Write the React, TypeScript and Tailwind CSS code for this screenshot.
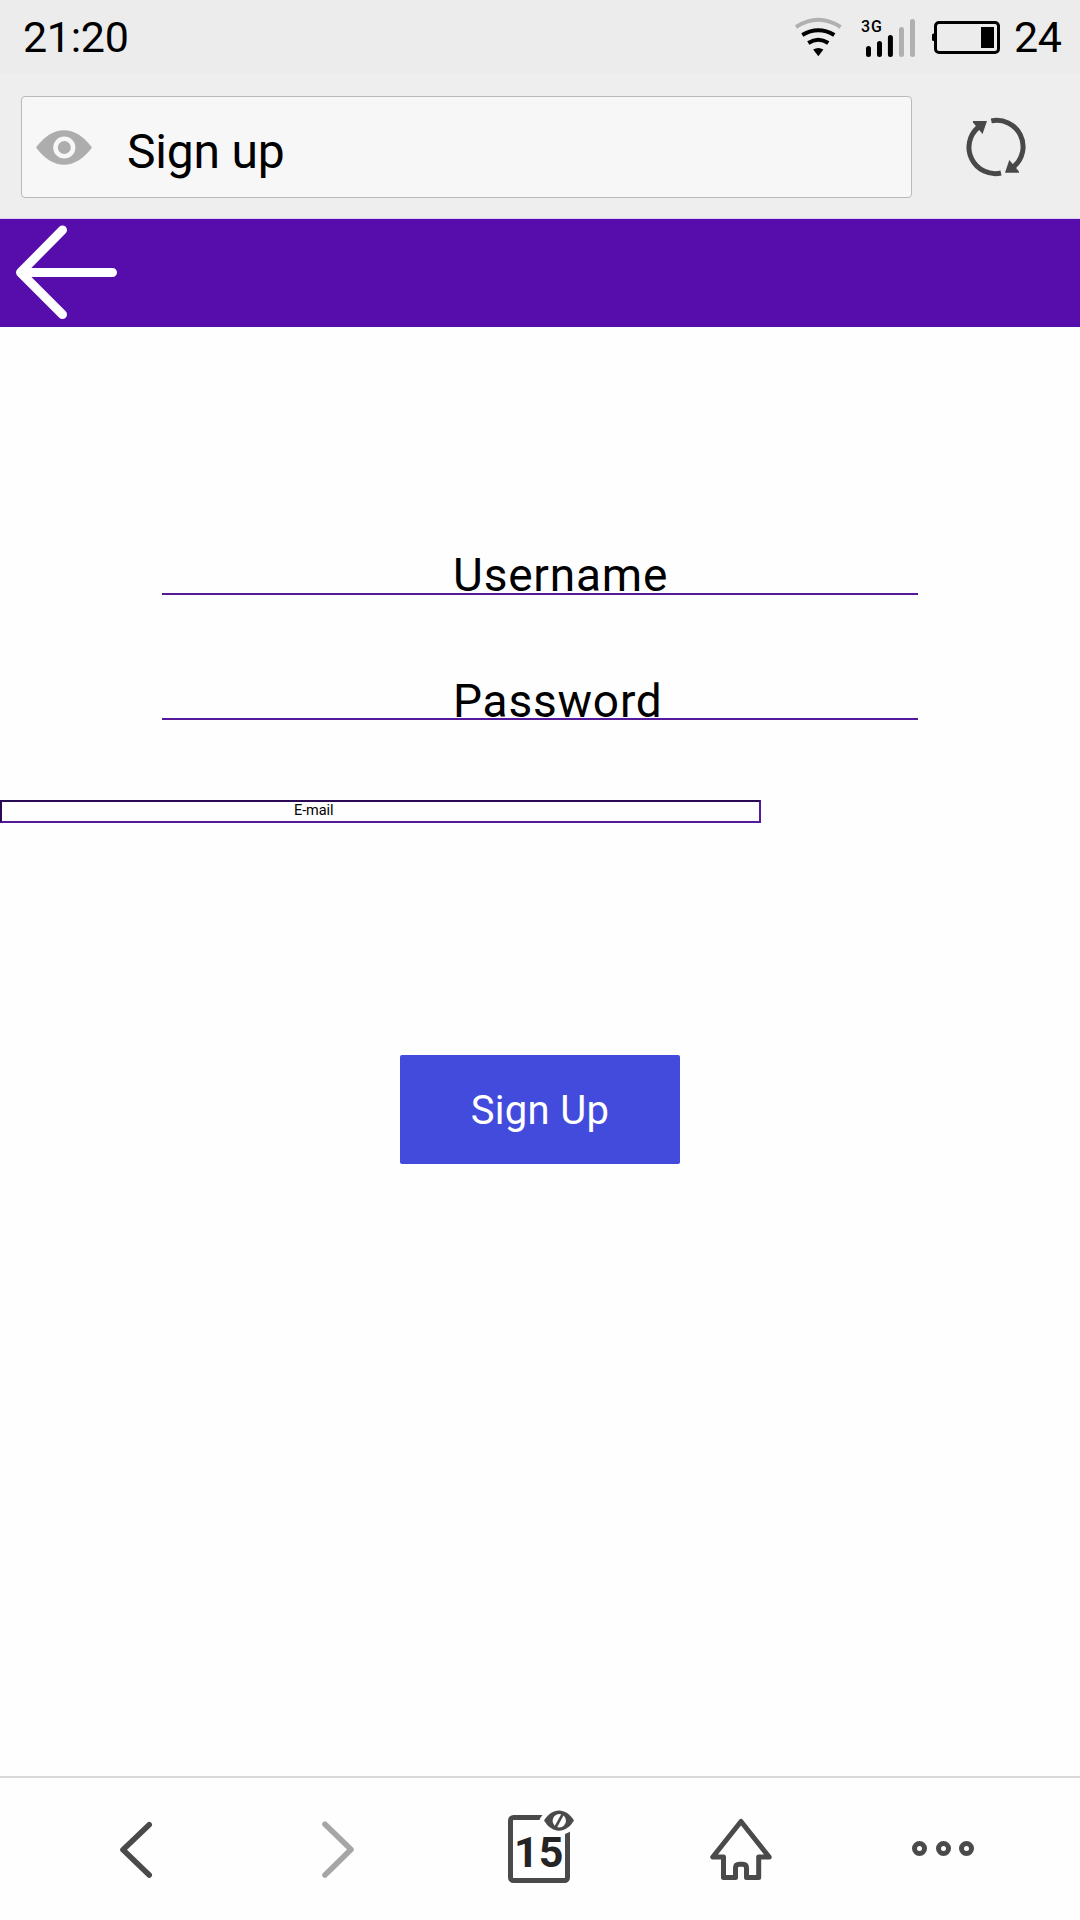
import React from "react";

function StatusBar() {
  return (
    <div className="flex h-[74px] items-start bg-[#ececec] pt-[12px] pl-[23px] text-[43px] leading-[50px] tracking-[-0.3px] text-black">
      <span className="w-[767px]">21:20</span>
      <svg className="-mt-[12px] h-[74px] w-[56px]" viewBox="790 0 56 74" fill="none" stroke="#000" strokeWidth="4">
        <path d="M796 27Q818.3 12.6 840.6 27" stroke="#b0b0b0" />
        <path d="M802.3 35Q818.3 25.4 834.3 35" />
        <path d="M808.3 43Q818.3 36.6 828.3 43" />
        <path d="M813.2 49.5Q818.3 46.5 823.4 49.5L818.3 56.2Z" fill="#000" stroke="none" />
      </svg>
      <div className="relative -mt-[12px] h-[74px] w-[76px]">
        <span className="absolute top-[17px] left-[15px] text-[16px] leading-[20px] font-medium tracking-[0.8px]">3G</span>
        <svg className="h-[74px] w-[76px]" viewBox="846 0 76 74" strokeLinecap="round" strokeWidth="5">
          <path d="M868.5 48.5V54.5M879.5 43.5V54.5M890.4 37.5V54.5" stroke="#000" />
          <path d="M901.5 29.5V54.5M912.5 21.5V54.5" stroke="#b0b0b0" />
        </svg>
      </div>
      <svg className="-mt-[12px] h-[74px] w-[92px]" viewBox="922 0 92 74">
        <rect x="935.5" y="22.5" width="63" height="30" rx="3.5" fill="none" stroke="#000" strokeWidth="3" />
        <path d="M935 33.5H933.5Q932 33.5 932 35V39.5Q932 41 933.5 41H935Z" />
        <rect x="981" y="27" width="13" height="21" />
      </svg>
      <span>24</span>
    </div>
  );
}

function AddressBar() {
  return (
    <div className="flex h-[145px] items-start border-b border-[#dccdf2] bg-[#eeeeee] pt-[22px] pl-[21px]">
      <div className="flex h-[102px] w-[891px] items-center rounded-[4px] border border-[#b9b9b9] bg-[#f7f7f7]">
        <svg className="ml-[12px] h-[40px] w-[60px]" viewBox="34 127 60 40">
          <path d="M36 147.5C53 124.5 75 124.5 92 147.5C75 170.5 53 170.5 36 147.5Z" fill="#adadad" />
          <circle cx="64.3" cy="147.5" r="8.8" fill="#adadad" stroke="#f7f7f7" strokeWidth="4.6" />
        </svg>
        <span className="mt-[9px] ml-[33px] text-[48px] leading-[56px] tracking-[-0.2px] text-black">Sign up</span>
      </div>
      <svg className="mt-[11px] ml-[48px] h-[80px] w-[72px]" viewBox="960 107 72 80" fill="none" stroke="#484848" strokeWidth="5">
        <path d="M991.3 120.9A26.3 26.3 0 0 1 1014 166.5" />
        <path d="M1001 173A26.3 26.3 0 0 1 978 127.5" />
        <path d="M1009.3 160L1019 171.5V172.7H1005Z" fill="#484848" stroke="none" />
        <path d="M973 121H987L982.5 134L973 122.5Z" fill="#484848" stroke="none" />
      </svg>
    </div>
  );
}

function FooterIcon({ x, color, children }: { x: number; color?: string; children: React.ReactNode }) {
  return (
    <svg
      className="h-[142px] w-[100px]"
      viewBox={`${x - 50} 1778 100 142`}
      fill="none"
      stroke={color ?? "#4a4a4a"}
      strokeWidth="5"
      strokeLinecap="round"
      strokeLinejoin="round"
    >
      {children}
    </svg>
  );
}

function Footer() {
  return (
    <div className="flex h-[144px] border-t-2 border-[#d8d8d8] bg-[#fefefe] pl-[34px]">
      <div className="flex w-[202px] justify-center">
        <FooterIcon x={135}>
          <path d="M149.2 1824.8L123 1849.8L149.2 1875" strokeWidth="5.6" />
        </FooterIcon>
      </div>
      <div className="flex w-[202px] justify-center">
        <FooterIcon x={337} color="#a6a6a6">
          <path d="M325 1824.2L351 1849.5L325 1875" strokeWidth="5.6" />
        </FooterIcon>
      </div>
      <div className="relative flex w-[202px] justify-center">
        <FooterIcon x={539}>
          <rect x="510.5" y="1817.5" width="57" height="63" rx="3" />
          <path d="M544 1820.5C552 1807 566 1807 574 1820.5C566 1834 552 1834 544 1820.5Z" stroke="#fefefe" strokeWidth="9" />
          <path d="M544 1820.5C552 1807 566 1807 574 1820.5C566 1834 552 1834 544 1820.5Z" fill="#4a4a4a" stroke="none" />
          <circle cx="559.3" cy="1820.7" r="6.7" fill="#fefefe" stroke="none" />
          <path d="M562.2 1815.2L556 1826.5" strokeWidth="2.6" />
        </FooterIcon>
        <span className="absolute top-[49px] left-[76px] text-[43px] leading-[50px] font-bold text-[#242424]">15</span>
      </div>
      <div className="flex w-[202px] justify-center">
        <FooterIcon x={741}>
          <path d="M741 1821.5L712.8 1857H723.5V1877.5H735.5V1868Q735.5 1864.2 739.3 1864.2H742.7Q746.5 1864.2 746.5 1868V1877.5H758.7V1857H769.2Z" />
        </FooterIcon>
      </div>
      <div className="flex w-[202px] justify-center">
        <FooterIcon x={943}>
          <circle cx="919.5" cy="1848.5" r="5" />
          <circle cx="943.5" cy="1848.5" r="5" />
          <circle cx="966.5" cy="1848.5" r="5" />
        </FooterIcon>
      </div>
    </div>
  );
}

export default function App() {
  return (
    <div className="flex h-[1920px] w-[1080px] flex-col overflow-hidden bg-[#fefefe] font-['Roboto',sans-serif] text-black">
      <StatusBar />
      <AddressBar />
      <div className="h-[108px] shrink-0 bg-[#560dab]">
        <svg className="h-[108px] w-[140px]" viewBox="0 219 140 108" fill="none" stroke="#fff" strokeWidth="9" strokeLinecap="round" strokeLinejoin="round">
          <path d="M62.5 230L20.5 272.5L62.5 314.5M20.5 272.5H112.5" />
        </svg>
      </div>
      <div className="flex grow flex-col">
        <div className="mt-[219px] ml-[162px] h-[49px] w-[756px] border-b-2 border-[#551a9b] pl-[291px] text-[46px] leading-[58px] tracking-[0.8px]">
          Username
        </div>
        <div className="mt-[76px] ml-[162px] h-[49px] w-[756px] border-b-2 border-[#551a9b] pl-[291px] text-[46px] leading-[60px] tracking-[0.8px]">
          Password
        </div>
        <div className="mt-[80px] h-[23px] w-[761px] border-2 border-t-[#2b0a55] border-r-[#551a9b] border-b-[#551a9b] border-l-[#2b0a55] pl-[292px] text-[14.5px] leading-[17px] tracking-[-0.1px]">
          E-mail
        </div>
        <button className="mt-[232px] ml-[400px] h-[109px] w-[280px] rounded-[2px] bg-[#434bdd] pt-px text-[40px] leading-[110px] tracking-[0.3px] text-white">
          Sign Up
        </button>
      </div>
      <Footer />
    </div>
  );
}
